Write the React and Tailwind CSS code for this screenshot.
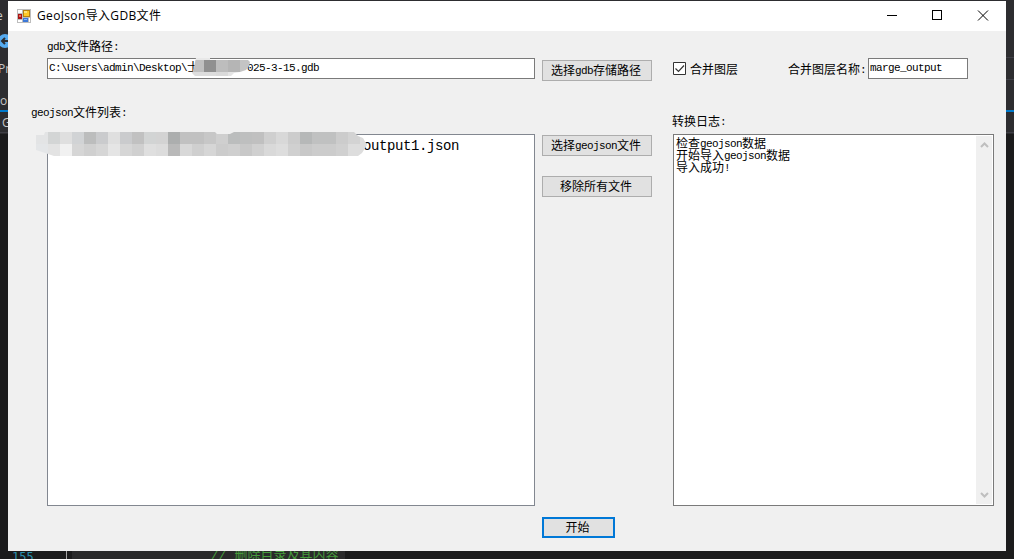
import React from 'react';

// Latin runs are half as wide as the CJK glyphs around them
function Sim({ children, className = '' }) {
    const parts = children.match(/[\x00-\x7f]+|[^\x00-\x7f]+/g) || [];
    return (
        <span className={`flex h-3 items-center whitespace-pre leading-3 ${className}`}>
            {parts.map((part, i) =>
                part.charCodeAt(0) < 128 ? (
                    <span key={i} className="text-[11px] leading-3 tracking-[-0.6px] font-['Liberation_Mono','Noto_Sans_CJK_SC',monospace]">{part}</span>
                ) : (
                    <span key={i} className="-mt-0.5 text-xs leading-3 font-['Noto_Sans_CJK_SC',sans-serif]">{part}</span>
                )
            )}
        </span>
    );
}

function FormButton({ children, primary, className = '' }) {
    return (
        <button
            type="button"
            className={`flex h-[21px] items-center justify-center bg-[#e1e1e1] pr-0.5 ${primary ? 'w-[73px] border-2 border-[#0078d7]' : 'w-[110px] border border-[#adadad]'} ${className}`}
        >
            <Sim>{children}</Sim>
        </button>
    );
}

function AppIcon() {
    return (
        <svg width="14" height="14" viewBox="0 0 14 14" shapeRendering="crispEdges">
            <rect width="14" height="14" fill="#bdbdbd" />
            <rect x="1" y="1" width="4" height="3" fill="#fff" />
            <rect x="1" y="11" width="4" height="2" fill="#fff" />
            <rect x="12" y="9" width="1" height="4" fill="#fff" />
            <rect x="1" y="5" width="4" height="5" fill="#a81414" />
            <rect x="2" y="6" width="2" height="2" fill="#e86a5c" />
            <rect x="6" y="1" width="7" height="7" fill="#b98310" />
            <rect x="7" y="2" width="5" height="5" fill="#ffc928" />
            <rect x="7" y="2" width="3" height="2" fill="#ffe37a" />
            <rect x="6" y="9" width="5" height="4" fill="#3c78d8" />
            <rect x="7" y="10" width="3" height="1" fill="#86b4f8" />
        </svg>
    );
}

function TitleBar() {
    return (
        <header className="flex h-[30px] shrink-0 items-center bg-white pl-[9px]">
            <AppIcon />
            <h1 className="ml-1.5 flex-1 text-xs tracking-[0.35px] text-black font-['Open_Sans','Noto_Sans_CJK_SC',sans-serif]">GeoJson导入GDB文件</h1>
            <svg width="138" height="30" viewBox="0 0 138 30" fill="none" stroke="#000" shapeRendering="crispEdges">
                <path d="M19 14.5h10" />
                <path d="M64.5 9.5h9v9h-9z" />
                <path d="M110 9.5l10 10M120 9.5l-10 10" shapeRendering="auto" />
            </svg>
        </header>
    );
}

const listMosaic = [
    ['#e3e4e5', '#d3d5d5', '#dfdfdf', '#d1d3d5', '#bcbdbd', '#cacbcd', '#dfdfdf', '#cacbcd', '#c1c1c1', '#d2d4d4', '#d3d3d3', '#acaeae', '#c1c1c1', '#c1c1c1', '#c7c7c7', '#cfcfcf', '#bbbdbd', '#bebfbf', '#c0c0c0', '#cfcfcf', '#d8d8d8', '#cccccc', '#b6b8b8', '#c0c1c1', '#c0c1c1', '#cccccc', '#d3d3d3', '#dddddd'],
    ['#e4e6e8', '#e3e3e3', '#f1f1f1', '#d6d6d6', '#d0d0d0', '#d6d6d6', '#e5e5e5', '#d6d6d6', '#d0d0d0', '#dfdfdf', '#dcdcdc', '#b9b9b9', '#d8d8d8', '#cfcfcf', '#d6d6d6', '#cccccc', '#cfcfcf', '#c8c8c8', '#d0d0d0', '#d9d9d9', '#dddddd', '#d0d0d0', '#c8c8c8', '#cccccc', '#cccccc', '#d0d0d0', '#dddddd', '#dddddd'],
];

const pathMosaic = [
    ['#e8e8e8', '#e8e8e8', '#f0f0f0', '#f0f0f0', '#f0f0f0'],
    ['#c0c0c0', '#909090', '#bdbdbd', '#b5b5b5', '#c4c4c4'],
    ['#dddddd', '#dddddd', '#dadada', '#e5e5e5', '#eeeeee'],
];

function Mosaic({ id, cells, outline, width, height, shift = 0, className }) {
    return (
        <svg className={`absolute ${className}`} width={width} height={height} shapeRendering="crispEdges">
            <clipPath id={id}>
                <path d={outline} />
            </clipPath>
            <g clipPath={`url(#${id})`}>
                {cells.map((row, y) =>
                    row.map((fill, x) => <rect key={`${x}-${y}`} x={x * 12} y={y * 12 + shift} width="12" height="12" fill={fill} />)
                )}
            </g>
        </svg>
    );
}

function TargetColumn() {
    return (
        <section className="flex w-[527px] flex-col">
            <Sim className="mt-2.5 ml-[39px]">gdb文件路径:</Sim>
            <div className="relative mt-[5px] ml-[39px] flex h-[21px] items-center border border-[#7a7a7a] bg-white pl-px">
                <Sim className="-mt-0.5">{'C:\\Users\\admin\\Desktop\\士        025-3-15.gdb'}</Sim>
                <Mosaic
                    id="pathMosaic"
                    cells={pathMosaic}
                    width={60}
                    height={19}
                    shift={-10}
                    outline="M4 0H18V2H56L58 4L57 8L54 12L48 14L42 15L39 18H3L0 15L2 10L3 4Z"
                    className="-top-px left-[144px]"
                />
            </div>
            <Sim className="mt-7 ml-[23px]">geojson文件列表:</Sim>
            <div className="relative mt-[15px] ml-[39px] h-[372px] border border-[#828790] bg-white">
                <div className="pt-px pl-[315px] text-[14px] leading-5 tracking-[-0.4px] font-['Liberation_Mono',monospace]">output1.json</div>
                <Mosaic
                    id="listMosaic"
                    cells={listMosaic}
                    width={331}
                    height={24}
                    outline="M9 0H179L181 2H194L198 0H318L322 4L327 6L331 13L326 21L322 24H18L12 22L0 18V3H8Z"
                    className="-top-[3px] -left-3"
                />
            </div>
        </section>
    );
}

function LogColumn() {
    return (
        <section className="ml-[21px] flex w-[321px] flex-col">
            <div className="mt-[27px] flex h-[21px] items-center">
                <svg width="13" height="13" viewBox="0 0 13 13" fill="none">
                    <path d="M.5.5h12v12H.5z" fill="#fff" stroke="#333" />
                    <path d="M2.5 6.5l3 3 5.5-6" stroke="#333" strokeWidth="1.2" />
                </svg>
                <Sim className="mt-0.5 ml-1">合并图层</Sim>
                <Sim className="mt-0.5 ml-[50px]">合并图层名称:</Sim>
                <div className="ml-0.5 flex h-[21px] w-[100px] items-center border border-[#7a7a7a] bg-white pl-px">
                    <Sim className="-mt-0.5">marge_output</Sim>
                </div>
            </div>
            <Sim className="mt-[37px] -ml-px">转换日志:</Sim>
            <div className="mt-1.5 flex h-[372px] border border-[#7a7a7a] bg-white">
                <div className="flex-1 pt-[3px] pl-0.5">
                    <Sim>检查geojson数据</Sim>
                    <Sim>开始导入geojson数据</Sim>
                    <Sim>导入成功!</Sim>
                </div>
                <div className="m-px flex w-4 flex-col items-center justify-between bg-[#f0f0f0] py-1.5">
                    <svg width="9" height="6" viewBox="0 0 9 6" fill="none" stroke="#bfbfbf" strokeWidth="2">
                        <path d="M1 5l3.5-3.5L8 5" />
                    </svg>
                    <svg width="9" height="6" viewBox="0 0 9 6" fill="none" stroke="#bfbfbf" strokeWidth="2">
                        <path d="M1 1l3.5 3.5L8 1" />
                    </svg>
                </div>
            </div>
        </section>
    );
}

// Slices of the editor that stay visible around the window
function EditorBackdrop() {
    return (
        <div className="absolute inset-0 overflow-hidden bg-[#1b1b1c] text-[#c8c8c8]">
            <div className="h-[134px] bg-[#2d2d30] text-xs font-['Open_Sans',sans-serif]">
                <span className="absolute top-2 left-[-4px]">e</span>
                <span className="absolute top-[61px] left-[-2px]">Pr</span>
                <span className="absolute top-[93px] left-0">o</span>
                <span className="absolute top-[115px] left-0.5">G</span>
                <svg className="absolute top-[34px] -left-0.5" width="14" height="14">
                    <circle cx="7" cy="7" r="7" fill="#55aaef" />
                    <path d="M11 7H4M7 4L4 7l3 3" fill="none" stroke="#2d2d30" strokeWidth="2" />
                </svg>
            </div>
            <div className="absolute top-[57px] right-0 h-px w-2 bg-[#3f3f46]" />
            <div className="absolute top-[79px] right-0 h-px w-2 bg-[#3f3f46]" />
            <div className="absolute top-[110px] h-0.5 w-full bg-[#007acc]" />
            <div className="absolute top-[132px] h-px w-full bg-[#3f3f46]" />
            <div className="absolute bottom-0 left-[66px] h-2 w-px bg-[#a5a5a5]" />
            <div className="absolute bottom-0 left-[72px] h-2 w-[273px] bg-[#2a2a2b]" />
            <span className="absolute top-[549px] left-3 text-xs leading-4 text-[#2b91af] font-['DejaVu_Sans_Mono',monospace]">155</span>
            <span className="absolute top-[548px] left-[211px] whitespace-pre text-[13px] leading-4 text-[#459a3c] font-['Liberation_Mono','Noto_Sans_CJK_SC',monospace]">{'// 删除目录及其内容'}</span>
        </div>
    );
}

export default function App() {
    return (
        <div className="relative h-[559px] w-[1014px] overflow-hidden pt-px pl-2">
            <EditorBackdrop />
            <main className="relative flex h-[550px] w-[998px] flex-col bg-[#f0f0f0] text-black">
                <TitleBar />
                <div className="flex flex-1">
                    <TargetColumn />
                    <section className="ml-[7px] flex w-[110px] flex-col">
                        <FormButton className="mt-[29px]">选择gdb存储路径</FormButton>
                        <FormButton className="mt-[54px]">选择geojson文件</FormButton>
                        <FormButton className="mt-5">移除所有文件</FormButton>
                        <FormButton primary className="mt-[320px]">开始</FormButton>
                    </section>
                    <LogColumn />
                </div>
            </main>
        </div>
    );
}
